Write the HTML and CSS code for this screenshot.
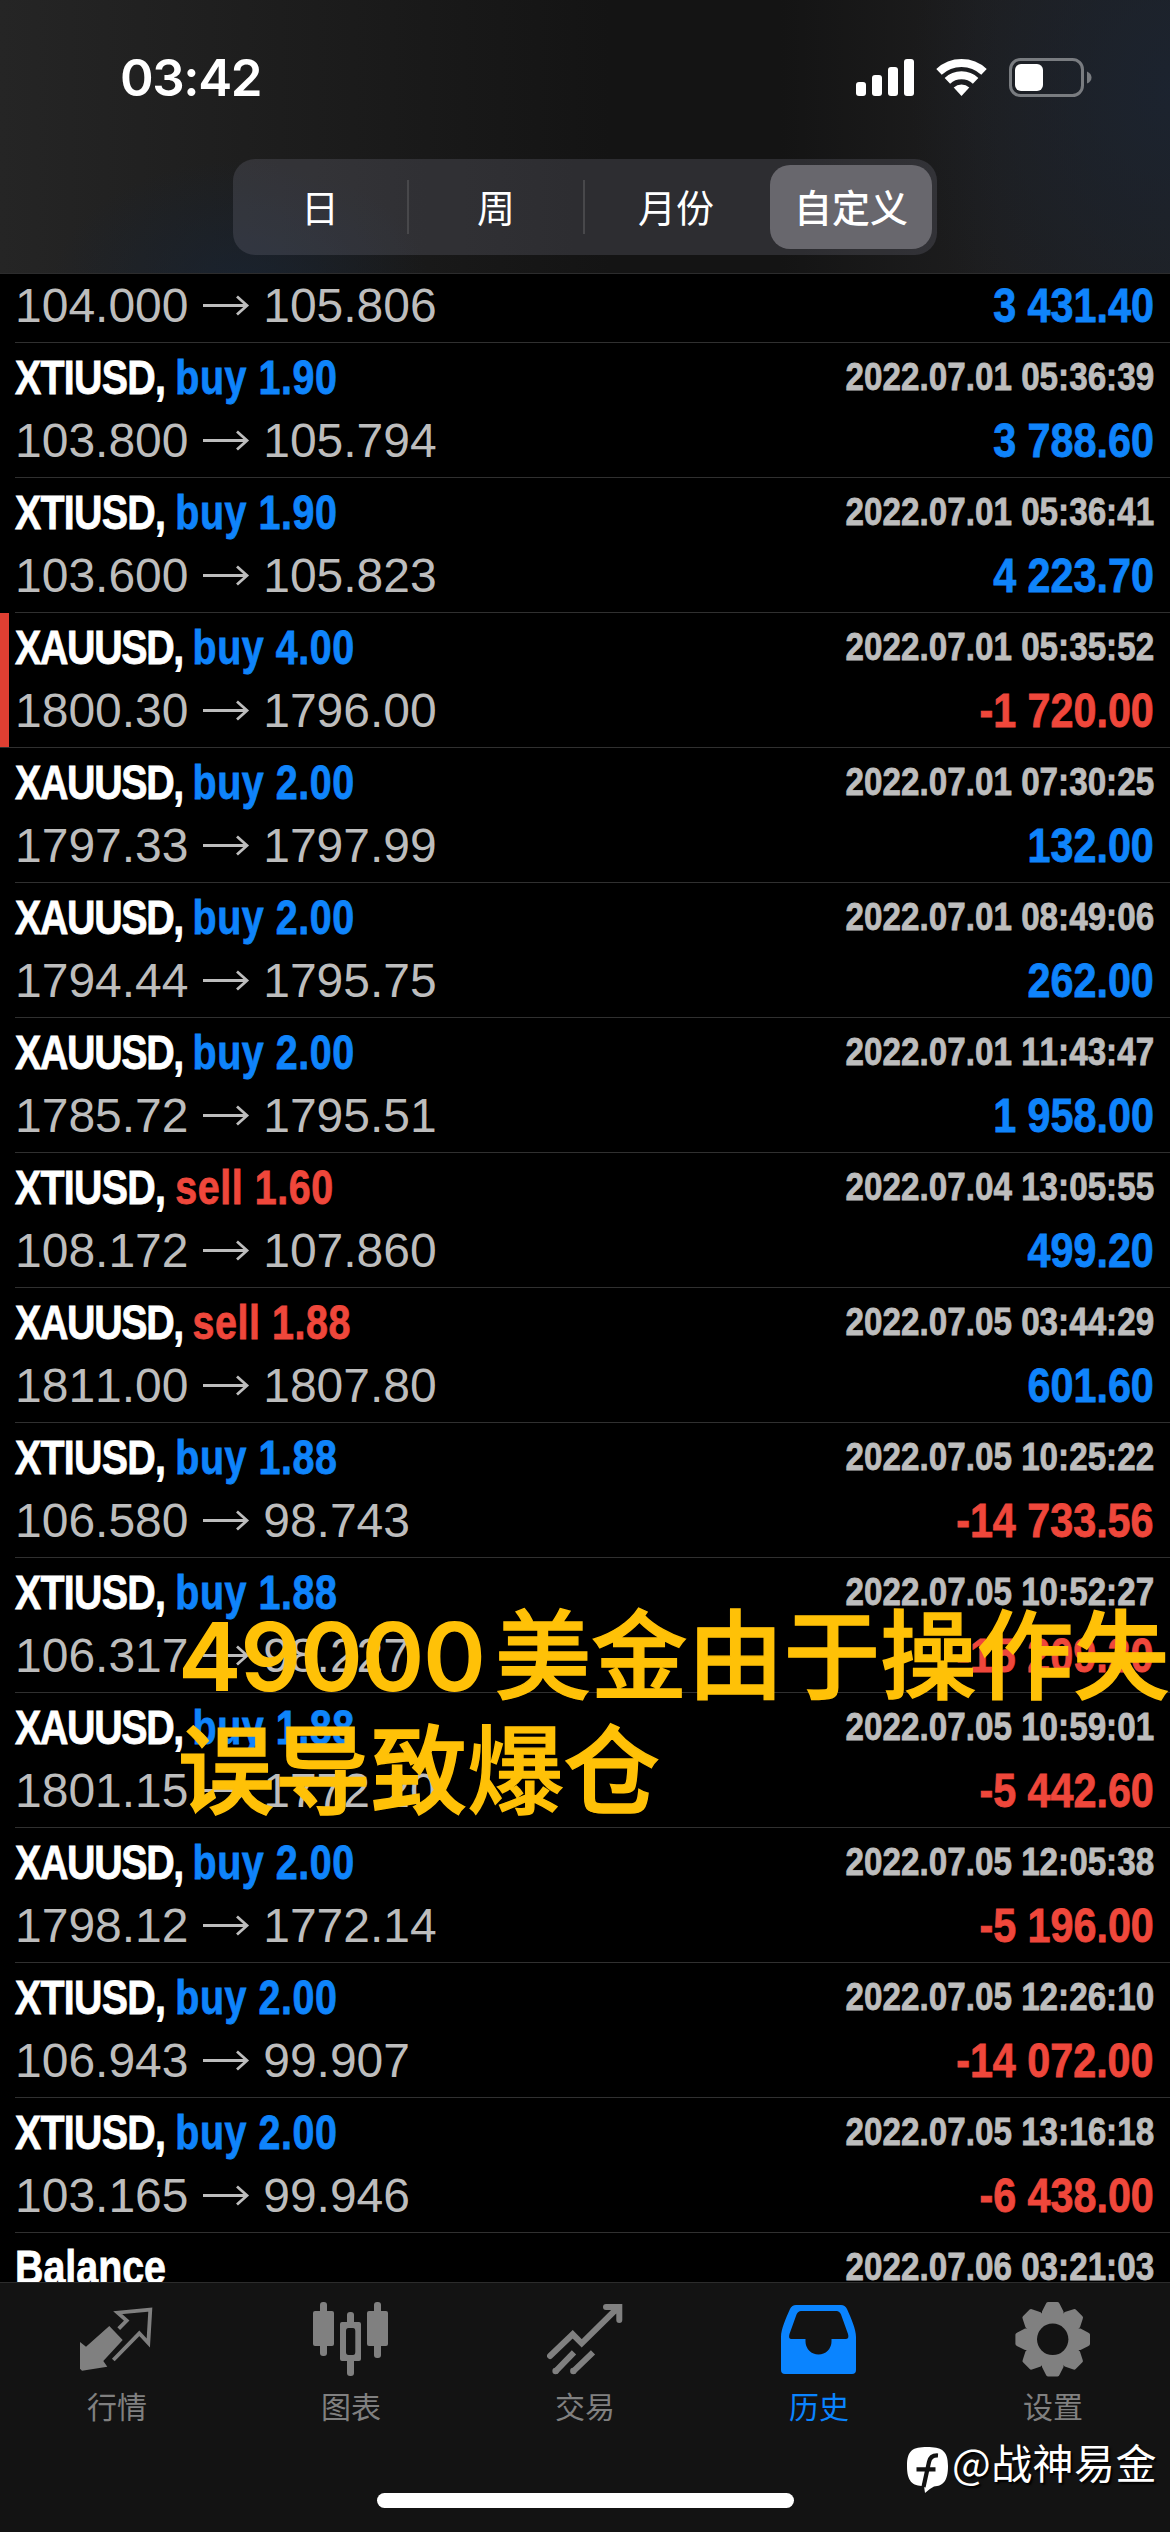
FILE: index.html
```html
<!DOCTYPE html>
<html lang="zh-CN">
<head>
<meta charset="utf-8">
<title>历史</title>
<link rel="stylesheet" href="styles.css">
</head>
<body>
<div class="screen">
  <header class="header">
    <div class="status">
      <span class="time">03:42</span>
      <div class="status-icons">
        <svg width="58" height="40" viewBox="0 0 58 40" fill="#fff"><rect x="0" y="24" width="10" height="14" rx="3"/><rect x="16" y="17" width="10" height="21" rx="3"/><rect x="32" y="9" width="10" height="29" rx="3"/><rect x="48" y="1" width="10" height="37" rx="3"/></svg>
        <svg width="51" height="40" viewBox="0 0 51 40" fill="none" stroke="#fff" stroke-width="8"><path d="M3 13.9A33 33 0 0 1 48 13.9M11.4 22.9A20.6 20.6 0 0 1 39.6 22.9"/><path d="M25.5 38L17.7 29.6A11.5 11.5 0 0 1 33.3 29.6Z" fill="#fff" stroke="none"/></svg>
        <svg width="83" height="40" viewBox="0 0 83 40"><rect x="1.5" y="1.5" width="72" height="36" rx="10" fill="none" stroke="#797c80" stroke-width="3"/><rect x="6" y="6" width="28" height="27" rx="6" fill="#fff"/><path d="M78 13.5Q82.5 15.5 82.500 19.500T78 25.500Z" fill="#797c80"/></svg>
      </div>
    </div>
    <nav class="segments">
      <span class="segment">日</span>
      <span class="segment">周</span>
      <span class="segment">月份</span>
      <span class="segment selected">自定义</span>
    </nav>
  </header>

  <main class="history">
    <ul class="deals">
      <li class="deal"><div class="line"></div><div class="line"><span class="prices">104.000 <svg class="arrow"><use href="#arrow"/></svg> 105.806</span><span class="profit up">3 431.40</span></div></li>
      <li class="deal"><div class="line"><span class="name">XTIUSD, <b class="up">buy 1.90</b></span><time>2022.07.01 05:36:39</time></div><div class="line"><span class="prices">103.800 <svg class="arrow"><use href="#arrow"/></svg> 105.794</span><span class="profit up">3 788.60</span></div></li>
      <li class="deal"><div class="line"><span class="name">XTIUSD, <b class="up">buy 1.90</b></span><time>2022.07.01 05:36:41</time></div><div class="line"><span class="prices">103.600 <svg class="arrow"><use href="#arrow"/></svg> 105.823</span><span class="profit up">4 223.70</span></div></li>
      <li class="deal stopped"><div class="line"><span class="name gold">XAUUSD, <b class="up">buy 4.00</b></span><time>2022.07.01 05:35:52</time></div><div class="line"><span class="prices">1800.30 <svg class="arrow"><use href="#arrow"/></svg> 1796.00</span><span class="profit down">-1 720.00</span></div></li>
      <li class="deal"><div class="line"><span class="name gold">XAUUSD, <b class="up">buy 2.00</b></span><time>2022.07.01 07:30:25</time></div><div class="line"><span class="prices">1797.33 <svg class="arrow"><use href="#arrow"/></svg> 1797.99</span><span class="profit up">132.00</span></div></li>
      <li class="deal"><div class="line"><span class="name gold">XAUUSD, <b class="up">buy 2.00</b></span><time>2022.07.01 08:49:06</time></div><div class="line"><span class="prices">1794.44 <svg class="arrow"><use href="#arrow"/></svg> 1795.75</span><span class="profit up">262.00</span></div></li>
      <li class="deal"><div class="line"><span class="name gold">XAUUSD, <b class="up">buy 2.00</b></span><time>2022.07.01 11:43:47</time></div><div class="line"><span class="prices">1785.72 <svg class="arrow"><use href="#arrow"/></svg> 1795.51</span><span class="profit up">1 958.00</span></div></li>
      <li class="deal"><div class="line"><span class="name">XTIUSD, <b class="down">sell 1.60</b></span><time>2022.07.04 13:05:55</time></div><div class="line"><span class="prices">108.172 <svg class="arrow"><use href="#arrow"/></svg> 107.860</span><span class="profit up">499.20</span></div></li>
      <li class="deal"><div class="line"><span class="name gold">XAUUSD, <b class="down">sell 1.88</b></span><time>2022.07.05 03:44:29</time></div><div class="line"><span class="prices">1811.00 <svg class="arrow"><use href="#arrow"/></svg> 1807.80</span><span class="profit up">601.60</span></div></li>
      <li class="deal"><div class="line"><span class="name">XTIUSD, <b class="up">buy 1.88</b></span><time>2022.07.05 10:25:22</time></div><div class="line"><span class="prices">106.580 <svg class="arrow"><use href="#arrow"/></svg> 98.743</span><span class="profit down">-14 733.56</span></div></li>
      <li class="deal"><div class="line"><span class="name">XTIUSD, <b class="up">buy 1.88</b></span><time>2022.07.05 10:52:27</time></div><div class="line"><span class="prices">106.317 <svg class="arrow"><use href="#arrow"/></svg> 98.227</span><span class="profit down">-15 209.20</span></div></li>
      <li class="deal"><div class="line"><span class="name gold">XAUUSD, <b class="up">buy 1.88</b></span><time>2022.07.05 10:59:01</time></div><div class="line"><span class="prices">1801.15 <svg class="arrow"><use href="#arrow"/></svg> 1772.20</span><span class="profit down">-5 442.60</span></div></li>
      <li class="deal"><div class="line"><span class="name gold">XAUUSD, <b class="up">buy 2.00</b></span><time>2022.07.05 12:05:38</time></div><div class="line"><span class="prices">1798.12 <svg class="arrow"><use href="#arrow"/></svg> 1772.14</span><span class="profit down">-5 196.00</span></div></li>
      <li class="deal"><div class="line"><span class="name">XTIUSD, <b class="up">buy 2.00</b></span><time>2022.07.05 12:26:10</time></div><div class="line"><span class="prices">106.943 <svg class="arrow"><use href="#arrow"/></svg> 99.907</span><span class="profit down">-14 072.00</span></div></li>
      <li class="deal"><div class="line"><span class="name">XTIUSD, <b class="up">buy 2.00</b></span><time>2022.07.05 13:16:18</time></div><div class="line"><span class="prices">103.165 <svg class="arrow"><use href="#arrow"/></svg> 99.946</span><span class="profit down">-6 438.00</span></div></li>
      <li class="deal"><div class="line"><span class="name balance">Balance</span><time>2022.07.06 03:21:03</time></div></li>
    </ul>
  </main>

  <footer class="tabbar">
    <nav class="tabs">
      <a class="tab"><svg viewBox="0 0 76 76"><path d="M1 41L7 45.700L30.300 25L43.700 39L24.300 60L28.300 65.700L3 69.700L1 67.700Z" fill="currentColor"/><path d="M39.700 27.700L47.700 19.700L38.700 11.700L71.300 8.700L69.300 42L60.300 32.300L34.300 59" fill="none" stroke="currentColor" stroke-width="3.800"/></svg>行情</a>
      <a class="tab"><svg viewBox="0 0 76 76" fill="currentColor"><rect x="0" y="10" width="21" height="35" rx="2"/><rect x="7" y="1" width="7" height="54" rx="3"/><rect x="54" y="10" width="21" height="35" rx="2"/><rect x="61" y="1" width="7" height="56" rx="3"/><rect x="34" y="11" width="7" height="14" rx="3"/><rect x="34" y="57" width="7" height="18" rx="3"/><path fill-rule="evenodd" d="M29 21H46Q48 21 48 23V58Q48 60 46 60H29Q27 60 27 58V23Q27 21 29 21ZM35.500 27Q33 27 33 30V51Q33 54 35.500 54H40Q42.300 54 42.300 51V30Q42.300 27 40 27Z"/></svg>图表</a>
      <a class="tab"><svg viewBox="0 0 76 76" fill="none" stroke="currentColor" stroke-width="6"><path d="M3 55L25.700 33.300L34.700 42.300L71 6.500M59 6H72.300V19" stroke-linecap="round"/><path d="M8.300 70.700L27 51.300M26 70.700L46 51.300"/><g fill="currentColor" stroke="none"><circle cx="8.600" cy="70" r="3.200"/><circle cx="26.300" cy="70" r="3.200"/></g></svg>交易</a>
      <a class="tab active"><svg viewBox="0 0 76 76" fill="currentColor"><path fill-rule="evenodd" d="M15 4H60Q64 4 66 8C70 17 75 28 75 36V69Q75 73 71 73H4Q0 73 0 69V36C0 28 5 17 9 8Q11 4 15 4ZM20 10Q17 10 15.500 13.500L8.500 33Q7 38 10.500 38H24.500V40.500A13 13 0 0 0 50.500 40.500V38H64.500Q68.500 38 67 33L60 13.500Q58.500 10 55.500 10Z"/></svg>历史</a>
      <a class="tab"><svg viewBox="0 0 76 76" fill="currentColor"><defs><path id="teeth" d="M33 1H42.500Q44 1 44.700 3L48.500 10.500V66L44.700 73.600Q44 75.600 42.500 75.600H33Q31.500 75.600 30.800 73.600L27 66V10.500L30.800 3Q31.500 1 33 1Z"/></defs><use href="#teeth"/><use href="#teeth" transform="rotate(45 37.700 38.300)"/><use href="#teeth" transform="rotate(90 37.700 38.300)"/><use href="#teeth" transform="rotate(135 37.700 38.300)"/><circle cx="37.700" cy="38.300" r="15.700" fill="#131313"/></svg>设置</a>
    </nav>
    <div class="home-indicator"></div>
  </footer>

  <p class="caption"><span class="amount">49000</span>美金由于操作失误导致爆仓</p>
  <div class="watermark">
    <svg width="42" height="47" viewBox="0 0 42 47"><path d="M20 0C34 0 41 3 41 19C41 34 36 39 27 39.500Q22 42 18 46L17 39C5 39 0 34 0 19C0 3 6 0 20 0Z" fill="#fff"/><path d="M31 8.500Q23.500 8 22 15L16.500 40M9.500 22.300H28.500" fill="none" stroke="#131313" stroke-width="4.200"/></svg>
    <span>@战神易金</span>
  </div>
</div>
<svg width="0" height="0" class="symbols"><symbol id="arrow" viewBox="0 0 48 26"><path d="M1 13.500H45M35 4.500L45 13.500L35 22.500" fill="none" stroke="#bdbdbd" stroke-width="2.800"/></symbol></svg>
</body>
</html>
```
FILE: styles.css
```css
* { box-sizing: border-box; }
body { margin: 0; background: #000; }
.symbols { display: block; }
.screen {
  position: relative;
  width: 1170px;
  height: 2532px;
  overflow: hidden;
  display: flex;
  flex-direction: column;
  background: #000;
  font-family: "Liberation Sans", "Noto Sans CJK SC", sans-serif;
  color: #fff;
}

.header {
  flex: none;
  height: 274px;
  border-bottom: 1px solid #2c2c2d;
  background:
    radial-gradient(ellipse 190px 130px at 240px 290px, rgba(24, 36, 52, .75), transparent),
    radial-gradient(ellipse 260px 330px at 1170px 90px, rgba(27, 36, 50, .8), transparent),
    linear-gradient(90deg, #252525 0, #1d1d1d 280px, #141414 610px, #141414 780px, #1e1e1f 1000px, #1f2022 1170px);
}
.status {
  display: flex;
  justify-content: space-between;
  height: 159px;
  padding: 58px 78px 0 120px;
}
.time {
  font: 600 51px/40px Inter, "Liberation Sans", sans-serif;
  letter-spacing: -1.4px;
}
.status-icons { display: flex; gap: 22px; }
.segments {
  display: grid;
  grid-template-columns: repeat(4, 1fr);
  width: 704px;
  height: 96px;
  margin-left: 233px;
  border-radius: 22px;
  background: rgba(118, 118, 135, .25);
}
.segment {
  display: flex;
  align-items: center;
  justify-content: center;
  margin: 21px 0;
  padding-bottom: 3px;
  border-right: 2px solid #48484b;
  font: 400 38px/1 "Noto Sans CJK SC", sans-serif;
}
.segment:nth-child(3) { padding-left: 8px; border-right-color: transparent; }
.segment.selected {
  margin: 6px 5px 6px 9px;
  border: 0;
  border-radius: 20px;
  background: #68676d;
  font-weight: 500;
}

.history { flex: none; height: 2008px; overflow: hidden; }
.deals { list-style: none; margin: -66px 0 0; padding: 0; }
.deal {
  height: 135px;
  margin-left: 15px;
  padding: 8px 16px 0 0;
  border-bottom: 1px solid #303030;
}
.stopped {
  margin-left: 0;
  padding-left: 15px;
  background: linear-gradient(#e03f32, #e03f32) left / 9px 100% no-repeat;
}
.line {
  display: flex;
  justify-content: space-between;
  height: 54px;
  margin-bottom: 9px;
  font-size: 48px;
  line-height: 54px;
  white-space: nowrap;
  font-kerning: none;
}

/* Condensed bold: squeezed horizontally, with a slight stroke to keep the weight */
.name, .profit, time {
  font-weight: 700;
  -webkit-text-stroke: .8px currentColor;
}
.name {
  letter-spacing: -.9px;
  transform: scaleX(.82);
  transform-origin: left;
}
.name.gold { letter-spacing: -1.6px; }
.name.balance { letter-spacing: 0; }
.name b { letter-spacing: .7px; }
.profit { transform: scaleX(.86); transform-origin: right; }
time {
  padding-top: 4px;
  font-size: 39px;
  line-height: 44px;
  color: #bdbdbd;
  transform: scaleX(.852);
  transform-origin: right;
}
.prices { color: #bdbdbd; }
.arrow { width: 48px; height: 26px; vertical-align: 4px; }
.up { color: #0f84fb; }
.down { color: #ef473b; }

.tabbar {
  flex: 1;
  border-top: 1px solid #2c2c2c;
  background: #131313;
}
.tabs { display: grid; grid-template-columns: repeat(5, 1fr); padding-top: 18px; }
.tab {
  display: flex;
  flex-direction: column;
  align-items: center;
  gap: 12px;
  color: #808080;
  font: 400 30px/32px "Noto Sans CJK SC", sans-serif;
}
.tab svg { width: 76px; height: 76px; }
.tab.active { color: #0a84ff; }
.home-indicator {
  width: 417px;
  height: 15px;
  margin: 72px auto 0;
  border-radius: 8px;
  background: #fff;
}

.caption {
  position: absolute;
  left: 178px;
  top: 1592px;
  width: 1030px;
  margin: 0;
  color: #ffc107;
  font: 500 96.400px/115px "Noto Sans CJK SC", sans-serif;
  -webkit-text-stroke: 1.400px currentColor;
  word-break: break-all;
}
.amount {
  margin-right: 10px;
  font-family: Inter, sans-serif;
  font-weight: 600;
  line-height: 0;
  font-size: 95.500px;
  letter-spacing: -1.400px;
  -webkit-text-stroke: 0;
}
.watermark {
  position: absolute;
  left: 907px;
  top: 2437px;
  display: flex;
  align-items: flex-start;
  gap: 3px;
  font: 400 41px/48px "Noto Sans CJK SC", sans-serif;
  letter-spacing: .4px;
  text-shadow: 2px 2px 2px #000;
}
.watermark svg { margin-top: 10px; }
```
